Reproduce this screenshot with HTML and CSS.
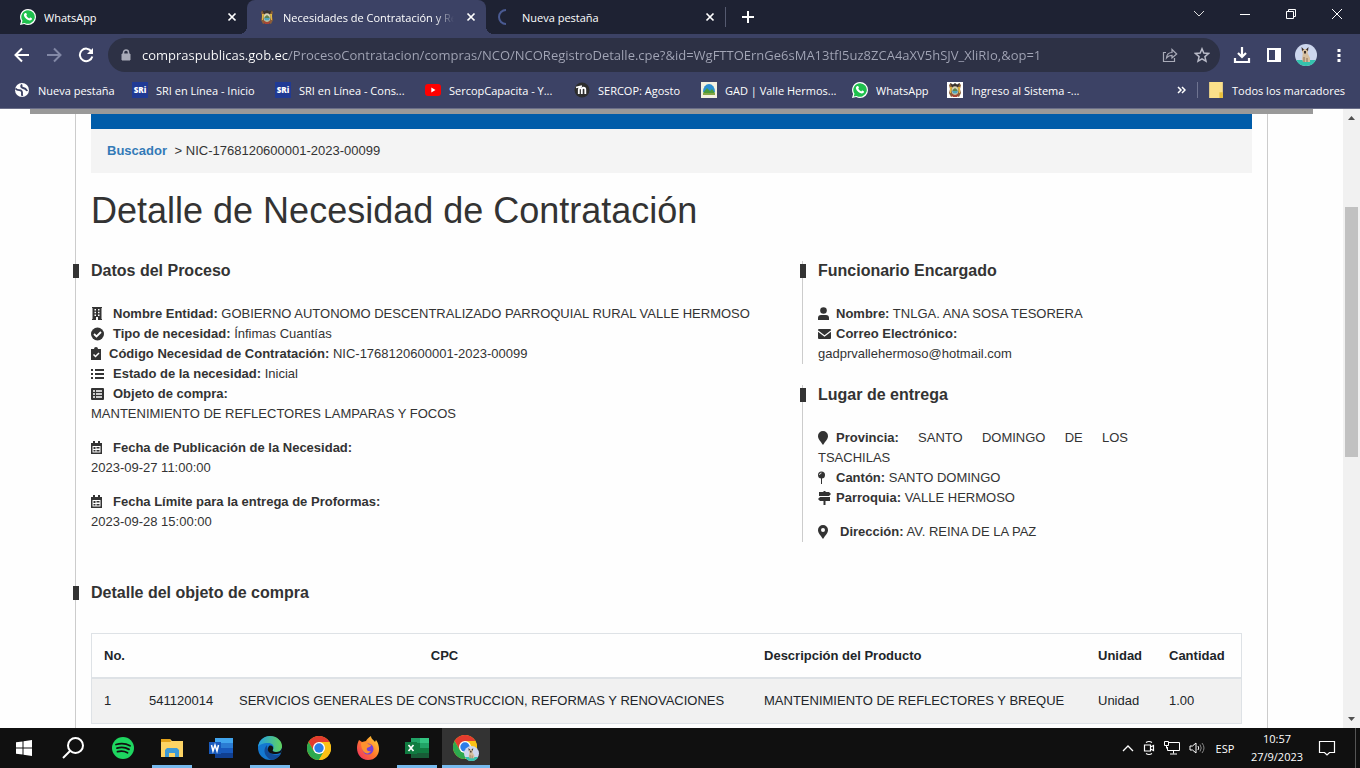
FILE: index.html
```html
<!DOCTYPE html>
<html lang="es">
<head>
    <meta charset="UTF-8">
    <meta name="viewport" content="width=device-width, initial-scale=1.0">
    <title>Necesidades de Contratación y Recepción de Proformas</title>
    <link rel="stylesheet" href="styles.css">
</head>
<body>

    <!-- Shared icons -->
    <svg class="symbols" aria-hidden="true">
        <symbol id="whatsapp" viewBox="0 0 16 16">
            <path fill="#fff" d="M8 0a8 8 0 0 1 0 16c-1.400 0-2.700-.4-3.900-1L0 16l1.100-4A8 8 0 0 1 8 0z"/>
            <path fill="#1fc04d" d="M8 1.200a6.800 6.800 0 1 1-3.400 12.700l-2.900.7.8-2.800A6.800 6.800 0 0 1 8 1.200z"/>
            <path fill="#fff" d="M5.300 4.100c.5-.3.9-.2 1.100.3l.5 1.200c.1.400-.5.9-.6 1.100.6 1.200 1.600 2.100 2.900 2.700.3-.2.800-1.100 1.200-.9l1.400.7c.4.2.1 1.400-.5 1.800-1 .7-2.200.5-3.700-.3-1.600-.8-3-2.300-3.600-3.900-.4-1.200.1-2.100 1.300-2.700z"/>
        </symbol>
        <symbol id="shield" viewBox="0 0 16 16">
            <path fill="#8a6038" d="M2 3l2-2 1 2h6l1-2 2 2-1 4 1 4-2 4-2-1-2 1-2-1-2 1-2-4 1-4z"/>
            <path fill="#e0b840" d="M3 5h2l-1 6H3zM13 5h-2l1 6h1z"/>
            <path fill="#3a3431" d="M3 1l3 1.500L8 1l2 1.500L13 1l-2 4H5z"/>
            <ellipse cx="8" cy="8.500" rx="3.300" ry="4.300" fill="#d9d2b4"/>
            <path fill="#4fa5bd" d="M5 9h6l-1 2.500H6z"/>
            <path fill="#5d8450" d="M5.500 8L8 6l2.500 2v1h-5z"/>
            <path fill="#a94335" d="M4 12l4 1.500 4-1.500-2 3H6z"/>
        </symbol>
        <symbol id="close" viewBox="0 0 10 10">
            <path d="M1.500 1.500l7 7m0-7l-7 7" stroke="currentColor" stroke-width="1.700"/>
        </symbol>
        <symbol id="calendar" viewBox="0 0 14 14">
            <path d="M0 2h2V0h2v2h3V0h2v2h2v11H0zM1.500 5v6.500h8V5z" fill="currentColor" fill-rule="evenodd"/>
            <path d="M2.500 6h2v2h-2zM5.500 6h3v1.500h-3zM2.500 9h2v1.500h-2zM5.500 9h3v1.500h-3z" fill="currentColor"/>
        </symbol>
        <symbol id="chrome" viewBox="0 0 24 24">
            <circle cx="12" cy="12" r="12" fill="#fbc116"/>
            <path fill="#e33b2e" d="M1.600 6A12 12 0 0 1 22.400 6H12L6.800 15z"/>
            <path fill="#2da94f" d="M1.600 6A12 12 0 0 0 12 24l5.200-9L12 18l-5.200-3z"/>
            <path fill="#fbc116" d="M12 6h10.400A12 12 0 0 1 12 24l5.200-9z"/>
            <circle cx="12" cy="12" r="6" fill="#fff"/>
            <circle cx="12" cy="12" r="4.700" fill="#2b7de9"/>
        </symbol>
        <symbol id="cat" viewBox="0 0 22 22">
            <circle cx="11" cy="11" r="11" fill="#cdd7ee"/>
            <path fill="#35c3ae" d="M1.200 16h19.600a11 11 0 0 1-19.600 0z"/>
            <path fill="#d6bf9f" d="M8 8h4l3 6v4H8l-1-3z"/>
            <path fill="#d6bf9f" d="M7 5h6v3l-2 2H9L7 8z"/>
            <path fill="#3a2f2b" d="M6.500 3l2.500 2.500L7 7zM13.500 3L11 5.500 13 7zM9 7h2v2.500H9z"/>
            <path stroke="#8a6e56" d="M9 13v5M12 14v4"/>
        </symbol>
    </svg>

    <header class="browser">
        <div class="tab-strip">
            <div class="tab">
                <svg class="favicon"><use href="#whatsapp"/></svg>
                <span class="tab-title">WhatsApp</span>
                <button class="tab-close" aria-label="Cerrar"><svg><use href="#close"/></svg></button>
            </div>
            <div class="tab active">
                <svg class="favicon"><use href="#shield"/></svg>
                <span class="tab-title fade">Necesidades de Contratación y Recepción</span>
                <button class="tab-close" aria-label="Cerrar"><svg><use href="#close"/></svg></button>
            </div>
            <div class="tab">
                <svg class="favicon" viewBox="0 0 16 16"><path d="M8 1a7 7 0 0 0 0 14" fill="none" stroke="#4a5a92" stroke-width="2"/></svg>
                <span class="tab-title">Nueva pestaña</span>
                <button class="tab-close" aria-label="Cerrar"><svg><use href="#close"/></svg></button>
            </div>
            <button class="new-tab" aria-label="Nueva pestaña"><svg width="14" height="14" viewBox="0 0 14 14"><path d="M7 1v12M1 7h12" stroke="#fff" stroke-width="2"/></svg></button>
            <div class="window-buttons">
                <button aria-label="Buscar pestañas"><svg width="12" height="12" viewBox="0 0 12 12"><path d="M1 3l5 5 5-5" fill="none" stroke="#ddd"/></svg></button>
                <button aria-label="Minimizar"><svg width="12" height="12" viewBox="0 0 12 12"><path d="M1 6.500h10" stroke="#fff"/></svg></button>
                <button aria-label="Restaurar"><svg width="12" height="12" viewBox="0 0 12 12"><path d="M1.500 3.500h7v7h-7zM3.500 3.500v-2h7v7h-2" fill="none" stroke="#fff"/></svg></button>
                <button aria-label="Cerrar ventana"><svg width="12" height="12" viewBox="0 0 12 12"><path d="M1 1l10 10M11 1L1 11" stroke="#fff"/></svg></button>
            </div>
        </div>

        <div class="toolbar">
            <button class="nav-button" aria-label="Atrás"><svg width="16" height="16" viewBox="0 0 16 16"><path d="M15 8H2M8 1.500L1.500 8 8 14.500" fill="none" stroke="#fff" stroke-width="2"/></svg></button>
            <button class="nav-button" aria-label="Adelante"><svg width="16" height="16" viewBox="0 0 16 16"><path d="M1 8h13M8 1.500L14.500 8 8 14.500" fill="none" stroke="#8288a6" stroke-width="2"/></svg></button>
            <button class="nav-button" aria-label="Recargar"><svg width="16" height="16" viewBox="0 0 16 16"><path d="M13.500 4.500A6.300 6.300 0 1 0 14.300 9.500" fill="none" stroke="#fff" stroke-width="2"/><path d="M15 1v6H9z" fill="#fff"/></svg></button>
            <div class="address-bar">
                <svg width="10" height="12" viewBox="0 0 10 12"><path d="M1 5h8v6H1z" fill="#a9abb8" stroke="#a9abb8"/><path d="M2.500 5V3.500a2.500 2.500 0 0 1 5 0V5" fill="none" stroke="#a9abb8" stroke-width="1.500"/></svg>
                <input class="address" type="text" aria-label="Dirección web" value="compraspublicas.gob.ec/ProcesoContratacion/compras/NCO/NCORegistroDetalle.cpe?&amp;id=WgFTTOErnGe6sMA13tfI5uz8ZCA4aXV5hSJV_XliRIo,&amp;op=1">
                <button aria-label="Compartir"><svg width="16" height="16" viewBox="0 0 16 16"><path d="M4 5.500H1.500v9h11V11" fill="none" stroke="#a9abb8" stroke-width="1.200"/><path d="M4.500 11c.3-3.500 2-5.500 5.500-5.500V2.500L14.700 7 10 11V8.300c-2.500 0-4 .7-5.500 2.700z" fill="none" stroke="#a9abb8" stroke-width="1.200"/></svg></button>
                <button aria-label="Añadir a marcadores"><svg width="16" height="16" viewBox="0 0 16 16"><path d="M8 1.800l1.800 4.300 4.700.4-3.600 3.100 1.100 4.600L8 11.800l-4 2.400 1.100-4.600-3.600-3.100 4.700-.4z" fill="none" stroke="#b9bbc8" stroke-width="1.500"/></svg></button>
            </div>
            <button class="tool" aria-label="Descargas"><svg width="18" height="18" viewBox="0 0 18 18"><path d="M9 1v9M5 7l4 4 4-4M2 12v4h14v-4" fill="none" stroke="#fff" stroke-width="2.200"/></svg></button>
            <button class="tool" aria-label="Panel lateral"><svg width="14" height="14" viewBox="0 0 14 14"><path d="M0 0h14v14H0zM2 2v10h6V2z" fill="#fff" fill-rule="evenodd"/></svg></button>
            <button class="tool" aria-label="Perfil"><svg width="22" height="22"><use href="#cat"/></svg></button>
            <button class="tool" aria-label="Menú"><svg width="4" height="14" viewBox="0 0 4 14"><path d="M.5 1h3v3h-3zM.5 6h3v3h-3zM.5 11h3v3h-3z" fill="#fff"/></svg></button>
        </div>

        <nav class="bookmarks">
            <div class="bookmark-list">
                <a href="#"><svg viewBox="0 0 16 16"><circle cx="8" cy="8" r="7" fill="#fff"/><path d="M1.500 6.500C4 9.500 6 7 7.500 9s-.5 3 1 5M8 2.500C6 5 8.500 6 10.500 6.500S12 9 13.500 8" fill="none" stroke="#3c4265" stroke-width="1.900"/></svg>Nueva pestaña</a>
                <a href="#"><span class="sri">SRi</span>SRI en Línea - Inicio</a>
                <a href="#"><span class="sri">SRi</span>SRI en Línea - Cons...</a>
                <a href="#"><svg viewBox="0 0 16 16"><rect y="2" width="16" height="12" rx="3" fill="#f00"/><path d="M6.300 5.500v5l4.200-2.500z" fill="#fff"/></svg>SercopCapacita - Y...</a>
                <a href="#"><svg viewBox="0 0 16 16"><circle cx="8" cy="8" r="7.500" fill="#2d2d2d"/><path d="M4.800 12V7.500a1.500 1.500 0 0 1 3 0V12m0-4.500a1.700 1.700 0 0 1 3.500 0V12M2 5.500l6-1.500" fill="none" stroke="#fff" stroke-width="1.800"/></svg>SERCOP: Agosto</a>
                <a href="#"><svg viewBox="0 0 16 16"><rect width="16" height="16" fill="#f4f1df"/><path d="M2 10a6 8 0 0 1 12 0z" fill="#2c8fd0"/><path d="M2 11l4-5 3 3 2-2 3 4z" fill="#4b9b3a"/><path d="M2 11h12v2H2z" fill="#87a646"/></svg>GAD | Valle Hermos...</a>
                <a href="#"><svg><use href="#whatsapp"/></svg>WhatsApp</a>
                <a href="#"><svg class="on-white"><use href="#shield"/></svg>Ingreso al Sistema -...</a>
            </div>
            <button class="more" aria-label="Más marcadores"><svg width="9" height="8" viewBox="0 0 9 8"><path d="M1 1l3 3-3 3M5 1l3 3-3 3" fill="none" stroke="#fff" stroke-width="1.500"/></svg></button>
            <a class="all-bookmarks" href="#"><svg viewBox="0 0 12 14"><path d="M0 0h12v14H0z" fill="#fbe08a"/><path d="M9 9h3v5H9z" fill="#e9c03c"/></svg>Todos los marcadores</a>
        </nav>
    </header>

    <div class="viewport">
        <main class="page">
            <div class="top-strip"></div>
            <div class="container">
                <div class="blue-bar"></div>
                <div class="breadcrumb"><a href="#">Buscador</a> &gt; NIC-1768120600001-2023-00099</div>

                <h1>Detalle de Necesidad de Contratación</h1>

                <div class="columns">
                    <section>
                        <h2>Datos del Proceso</h2>
                        <p>
                            <svg class="icon" viewBox="0 0 14 14"><path d="M1 0h10v1h-.5v11H11v1H7v-3H5v3H1v-1h.5V1H1zM3.500 2v1.500H5V2zM7 2v1.500h1.500V2zM3.500 4.700v1.500H5V4.700zM7 4.700v1.500h1.500V4.700zM3.500 7.400v1.500H5V7.400zM7 7.400v1.500h1.500V7.400z" fill="currentColor" fill-rule="evenodd"/></svg><b>Nombre Entidad:</b> GOBIERNO AUTONOMO DESCENTRALIZADO PARROQUIAL RURAL VALLE HERMOSO<br>
                            <svg class="icon" viewBox="0 0 14 14"><circle cx="6.500" cy="7" r="6.500" fill="currentColor"/><path d="M3 7l2.500 2.500L10 5" fill="none" stroke="#fff" stroke-width="1.800"/></svg><b>Tipo de necesidad:</b> Ínfimas Cuantías<br>
                            <svg class="icon narrow" viewBox="0 0 10 14"><path d="M0 2h3a2 2 0 0 1 4 0h3v11H0z" fill="currentColor"/><path d="M2.500 7.500l2 2 3.500-3.500" fill="none" stroke="#fff" stroke-width="1.500"/></svg><b>Código Necesidad de Contratación:</b> NIC-1768120600001-2023-00099<br>
                            <svg class="icon" viewBox="0 0 14 14"><path d="M0 2h2v2H0zM0 6h2v2H0zM0 10h2v2H0zM4 2h9v2H4zM4 6h9v2H4zM4 10h9v2H4z" fill="currentColor"/></svg><b>Estado de la necesidad:</b> Inicial<br>
                            <svg class="icon" viewBox="0 0 14 14"><rect y="1" width="13" height="12" rx="1" fill="currentColor"/><path d="M2 4h2M5 4h6M2 7h2M5 7h6M2 10h2M5 10h6" stroke="#fff" stroke-width="1.300"/></svg><b>Objeto de compra:</b><br>
                            MANTENIMIENTO DE REFLECTORES LAMPARAS Y FOCOS
                        </p>
                        <p>
                            <svg class="icon"><use href="#calendar"/></svg><b>Fecha de Publicación de la Necesidad:</b><br>
                            2023-09-27 11:00:00
                        </p>
                        <p>
                            <svg class="icon"><use href="#calendar"/></svg><b>Fecha Límite para la entrega de Proformas:</b><br>
                            2023-09-28 15:00:00
                        </p>
                    </section>

                    <div class="side">
                        <section>
                            <h2>Funcionario Encargado</h2>
                            <p>
                                <svg class="icon" viewBox="0 0 14 14"><circle cx="5.500" cy="3.500" r="3.300" fill="currentColor"/><path d="M0 13v-2a3 3 0 0 1 3-3h5a3 3 0 0 1 3 3v2z" fill="currentColor"/></svg><b>Nombre:</b> TNLGA. ANA SOSA TESORERA<br>
                                <svg class="icon" viewBox="0 0 14 14"><rect y="2" width="13" height="10" rx="1" fill="currentColor"/><path d="M0 4l6.500 5L13 4" fill="none" stroke="#fff" stroke-width="1.200"/></svg><b>Correo Electrónico:</b><br>
                                gadprvallehermoso@hotmail.com
                            </p>
                        </section>
                        <section>
                            <h2>Lugar de entrega</h2>
                            <p>
                                <svg class="icon" viewBox="0 0 14 14"><path d="M5 14C2 9.500 0 8 0 5a5 5 0 0 1 10 0c0 3-2 4.500-5 9z" fill="currentColor"/></svg><b>Provincia:</b> SANTO DOMINGO DE LOS TSACHILAS<br>
                                <svg class="icon" viewBox="0 0 14 14"><circle cx="3.500" cy="4" r="3.500" fill="currentColor"/><path d="M3 7h1v6H3z" fill="currentColor"/><path d="M1.500 4a2 2 0 0 1 2-2" fill="none" stroke="#fff" stroke-width=".8"/></svg><b>Cantón:</b> SANTO DOMINGO<br>
                                <svg class="icon" viewBox="0 0 14 14"><path d="M1 1h10l2 2-2 2H1zM2 6h10v4H2L0 8zM5.500 0h2v14h-2z" fill="currentColor"/><path d="M1 5.500h12" stroke="#fff"/></svg><b>Parroquia:</b> VALLE HERMOSO
                            </p>
                            <p class="spaced">
                                <svg class="icon" viewBox="0 0 14 14"><path d="M5 14C2 9.500 0 8 0 5a5 5 0 0 1 10 0c0 3-2 4.500-5 9zM5 3a2 2 0 1 0 0 4 2 2 0 0 0 0-4z" fill="currentColor" fill-rule="evenodd"/></svg><b>Dirección:</b> AV. REINA DE LA PAZ
                            </p>
                        </section>
                    </div>
                </div>

                <section>
                    <h2>Detalle del objeto de compra</h2>
                    <table>
                        <colgroup>
                            <col class="col-no"><col class="col-code"><col class="col-cpc"><col><col class="col-unit"><col class="col-qty">
                        </colgroup>
                        <thead>
                            <tr>
                                <th>No.</th>
                                <th class="center" colspan="2">CPC</th>
                                <th>Descripción del Producto</th>
                                <th>Unidad</th>
                                <th>Cantidad</th>
                            </tr>
                        </thead>
                        <tbody>
                            <tr>
                                <td>1</td>
                                <td>541120014</td>
                                <td>SERVICIOS GENERALES DE CONSTRUCCION, REFORMAS Y RENOVACIONES</td>
                                <td>MANTENIMIENTO DE REFLECTORES Y BREQUE</td>
                                <td>Unidad</td>
                                <td>1.00</td>
                            </tr>
                        </tbody>
                    </table>
                </section>
            </div>
        </main>

        <div class="scrollbar">
            <svg width="7" height="4" viewBox="0 0 7 4"><path d="M0 4l3.500-4L7 4z" fill="#505050"/></svg>
            <div class="track"><div class="thumb"></div></div>
            <svg width="7" height="4" viewBox="0 0 7 4"><path d="M0 0l3.500 4L7 0z" fill="#505050"/></svg>
        </div>
    </div>

    <footer class="taskbar">
        <div class="apps">
            <button aria-label="Inicio"><svg width="16" height="16" viewBox="0 0 16 16"><path d="M0 2.300L6.500 1.400v6.100H0zM7.500 1.200L16 0v7.500H7.500zM0 8.500h6.500v6.100L0 13.700zM7.500 8.500H16V16l-8.500-1.200z" fill="#fff"/></svg></button>
            <button class="search" aria-label="Buscar"><svg width="22" height="22" viewBox="0 0 22 22"><circle cx="13.500" cy="8.500" r="7.500" fill="none" stroke="#fff" stroke-width="2"/><path d="M8 14l-7 7" stroke="#fff" stroke-width="2"/></svg></button>
            <button aria-label="Spotify"><svg width="22" height="22" viewBox="0 0 22 22"><circle cx="11" cy="11" r="11" fill="#1ed760"/><path d="M4 7.500c5-1.500 10-1 14 1.200M5 11.200c4-1.200 8.500-.8 12 1.200M5.500 14.700c3.500-.9 7-.6 10 1.100" fill="none" stroke="#111" stroke-width="1.800" stroke-linecap="round"/></svg></button>
            <button class="running" aria-label="Explorador de archivos"><svg width="22" height="20" viewBox="0 0 22 20"><path d="M0 1h9l2 2h11v16H0z" fill="#fcd364"/><path d="M0 1h9l1 3H0z" fill="#e3a21a"/><path d="M4 19v-7l2-2h10l2 2v7h-4v-4H8v4z" fill="#3d9ad6"/></svg></button>
            <button aria-label="Word"><svg width="24" height="22" viewBox="0 0 24 22"><path d="M6 1h18v5H6z" fill="#41a5ee"/><path d="M6 6h18v5H6z" fill="#2b7cd3"/><path d="M6 11h18v5H6z" fill="#185abd"/><path d="M6 16h18v5H6z" fill="#103f91"/><path d="M0 5h12v12H0z" fill="#185abd"/><path d="M2.500 8L4 14l2-6 2 6 1.500-6" fill="none" stroke="#fff" stroke-width="1.500"/></svg></button>
            <button class="running" aria-label="Edge">
                <svg width="24" height="24" viewBox="0 0 24 24">
                    <defs><linearGradient id="edge-top"><stop offset="0" stop-color="#249fe5"/><stop offset="1" stop-color="#62d35b"/></linearGradient></defs>
                    <circle cx="12" cy="12" r="12" fill="#1478d0"/>
                    <path d="M0 11C1 4 6 0 12 0c7 0 12 5 12 10 0 4-3 6-6 6-3 0-4-1-3-2.500 2-4-1-6.500-5-6.500-5 0-9 2-10 4z" fill="url(#edge-top)"/>
                    <path d="M9 9c-5 5-2 12 4 15 4 0 8-3 10-6-7 3-14-1-14-9z" fill="#124b98"/>
                    <path d="M11 10c-3 4 0 8 5 8 3 0 5-.5 7-1.500l1-2.500v-2c-1 3-3 4-6 4-3 0-4-1-3-2.500 1-2-1-5-4-3.500z" fill="#101010"/>
                </svg>
            </button>
            <button aria-label="Chrome"><svg width="24" height="24"><use href="#chrome"/></svg></button>
            <button aria-label="Firefox">
                <svg width="24" height="24" viewBox="0 0 24 24">
                    <defs><linearGradient id="fire" x1="1" y1="0" x2="0" y2="1"><stop offset="0" stop-color="#ffe13c"/><stop offset=".5" stop-color="#ff7a2b"/><stop offset="1" stop-color="#f0256c"/></linearGradient></defs>
                    <path d="M3 4l3 2 4-1c1-2 3-4 5-5 0 3 3 4 4 6l1-2c6 8 3 20-8 20C3 24-2 14 3 4z" fill="url(#fire)"/>
                    <circle cx="12" cy="13" r="5.500" fill="#7640d8"/>
                    <path d="M5 7c3-2 6-1 7 1l3 1c0 2-3 2-4 3-1 2 1 4 4 3-3 5-10 2-10-8z" fill="#ff922e"/>
                </svg>
            </button>
            <button class="running" aria-label="Excel"><svg width="24" height="22" viewBox="0 0 24 22"><path d="M6 1h18v20H6z" fill="#21a366"/><path d="M6 6h9v10H6z" fill="#107c41"/><path d="M15 1h9v5h-9z" fill="#33c481"/><path d="M6 16h18v5H6z" fill="#185c37"/><path d="M15 11h9v5h-9z" fill="#107c41"/><path d="M0 5h12v12H0z" fill="#107c41"/><path d="M3.500 8l5 6M8.500 8l-5 6" stroke="#fff" stroke-width="1.700"/></svg></button>
            <button class="running current" aria-label="Chrome, perfil"><svg width="26" height="26" viewBox="0 0 26 26"><use href="#chrome" width="24" height="24"/><use href="#cat" x="11" y="11" width="15" height="15"/></svg></button>
        </div>

        <div class="tray">
            <svg width="12" height="8" viewBox="0 0 12 8"><path d="M1 7l5-5 5 5" fill="none" stroke="#fff" stroke-width="1.300"/></svg>
            <svg width="12" height="16" viewBox="0 0 12 16"><path d="M1.500 5h6v6h-6zM7.500 7l3-1.500v5L7.500 9M3 2.500q3-2 6 0M3 13.500q3 2 6 0" fill="none" stroke="#fff" stroke-width="1.200"/></svg>
            <svg width="16" height="14" viewBox="0 0 16 14"><path d="M5 1.500h10.500v8H3.500V6M9.500 9.500v3M6 13h7" fill="none" stroke="#fff"/><path d="M.5.500h4v4h-4zM2.500 4.500v3" fill="none" stroke="#fff"/></svg>
            <svg width="16" height="14" viewBox="0 0 16 14"><path d="M1 5h2.500L7 2v10L3.500 9H1z" fill="none" stroke="#fff"/><path d="M9 5q1.500 2 0 4" fill="none" stroke="#fff"/><path d="M11 3.500q2.500 3.500 0 7M13 2q4 5 0 10" fill="none" stroke="#888"/></svg>
            <span class="lang">ESP</span>
            <div class="clock">10:57<br>27/9/2023</div>
            <svg width="18" height="18" viewBox="0 0 18 18"><path d="M1.500 2.500h15v11h-5L9 16l-2.500-2.500h-5z" fill="none" stroke="#fff" stroke-width="1.200"/></svg>
        </div>
    </footer>

</body>
</html>
```
FILE: styles.css
```css
* {
    box-sizing: border-box;
}
body {
    margin: 0;
    height: 100vh;
    display: flex;
    flex-direction: column;
    overflow: hidden;
    font-family: "Liberation Sans", Arial, sans-serif;
    font-size: 13px;
    color: #333;
}
button {
    padding: 0;
    border: none;
    background: none;
    color: #fff;
    display: flex;
    align-items: center;
    justify-content: center;
}
.symbols {
    position: absolute;
    width: 0;
    height: 0;
}

/* Browser window */
.browser {
    flex: none;
    background-color: #3c4265;
    border-bottom: 1px solid #6a6e88;
    font-family: "Open Sans", sans-serif;
    font-size: 11px;
    color: #fff;
}
.tab-strip {
    display: flex;
    height: 34px;
    padding-left: 8px;
    background-color: #1e2233;
}
.tab {
    display: flex;
    align-items: center;
    width: 239px;
    padding: 0 10px 0 12px;
    position: relative;
}
.tab.active {
    background-color: #3c4265;
    border-radius: 8px 8px 0 0;
}
.tab.active::before,
.tab.active::after {
    content: "";
    position: absolute;
    bottom: 0;
    width: 8px;
    height: 8px;
}
.tab.active::before {
    right: 100%;
    background: radial-gradient(circle at 0 0, #1e2233 8px, #3c4265 8px);
}
.tab.active::after {
    left: 100%;
    background: radial-gradient(circle at 100% 0, #1e2233 8px, #3c4265 8px);
}
.favicon {
    flex: none;
    width: 16px;
    height: 16px;
}
.tab-title {
    flex: 1;
    margin: 0 8px;
    overflow: hidden;
    white-space: nowrap;
}
.tab-title.fade {
    margin-right: 12px;
    -webkit-mask-image: linear-gradient(to left, transparent, #000 20px);
    mask-image: linear-gradient(to left, transparent, #000 20px);
}
.tab-close svg {
    width: 10px;
    height: 10px;
}
.new-tab {
    width: 46px;
    position: relative;
}
.new-tab::before {
    content: "";
    position: absolute;
    left: 0;
    top: 7px;
    width: 1px;
    height: 20px;
    background-color: #555a70;
}
.window-buttons {
    display: flex;
    margin-left: auto;
}
.window-buttons button {
    width: 46px;
    height: 28px;
}

.toolbar {
    display: flex;
    align-items: center;
    height: 42px;
    padding: 0 12px 0 6px;
}
.nav-button {
    width: 32px;
    height: 32px;
}
.address-bar {
    flex: 1;
    display: flex;
    align-items: center;
    gap: 16px;
    height: 34px;
    margin: 0 6px;
    padding: 0 10px 0 13px;
    border-radius: 17px;
    background-color: #2d3145;
}
.address-bar > svg {
    margin-right: -5px;
}
.address {
    flex: 1;
    min-width: 0;
    border: none;
    outline: none;
    padding: 0;
    font-family: "Open Sans", sans-serif;
    font-size: 13px;
    color: #a3a6b7;
    background: linear-gradient(to right, #fff 147px, #a3a6b7 147px);
    -webkit-background-clip: text;
    background-clip: text;
    -webkit-text-fill-color: transparent;
}
.tool {
    width: 32px;
    height: 32px;
}
.tool:last-child {
    width: 34px;
    margin-right: -8px;
}

.bookmarks {
    display: flex;
    align-items: center;
    height: 32px;
    padding: 0 14px 4px;
}
.bookmarks a {
    display: flex;
    align-items: center;
    gap: 8px;
    color: #fff;
    text-decoration: none;
    white-space: nowrap;
}
.bookmarks a svg {
    flex: none;
    width: 16px;
    height: 16px;
}
.bookmarks .on-white {
    background-color: #fff;
}
.bookmarks .sri {
    width: 16px;
    height: 16px;
    background-color: #203a94;
    font-size: 8px;
    font-weight: 800;
    line-height: 16px;
    text-align: center;
}
.bookmark-list {
    flex: 1;
    display: grid;
    grid-template-columns: 118px 143px 150px 149px 127px 151px 95px 1fr;
}
.more {
    width: 24px;
    height: 16px;
    padding-right: 8px;
    border-right: 1px solid #6f7491;
    margin-right: 10px;
}
.all-bookmarks {
    width: 138px;
}

/* Web page */
.viewport {
    flex: 1;
    min-height: 0;
    display: flex;
    background-color: #fefefe;
}
.page {
    flex: 1;
    min-width: 0;
    overflow: hidden;
}
.top-strip {
    height: 5px;
    margin: 0 30px;
    background-color: #999;
}
.container {
    margin: 0 75px;
    padding: 0 15px 40px;
    border: 1px solid #ccc;
    border-width: 0 1px;
}
.blue-bar {
    height: 15px;
    background-color: #005ca9;
}
.breadcrumb {
    height: 44px;
    padding: 0 16px;
    line-height: 44px;
    background-color: #f4f4f4;
}
.breadcrumb a {
    margin-right: 4px;
    color: #337ab7;
    font-weight: bold;
    text-decoration: none;
}
h1 {
    margin: 16px 0 0;
    font-size: 36px;
    font-weight: normal;
    line-height: 44px;
}
h2 {
    position: relative;
    margin: 0 0 23px;
    font-size: 16px;
    line-height: 20px;
}
/* black marker that sits over the vertical line */
h2::before {
    content: "";
    position: absolute;
    left: -18px;
    top: 3px;
    width: 6px;
    height: 14px;
    background-color: #333;
}
p {
    margin: 0 0 14px;
    line-height: 20px;
}
b {
    font-weight: bold;
}
.icon {
    width: 14px;
    height: 14px;
    margin-right: 8px;
    vertical-align: -3px;
}
.icon.narrow {
    width: 10px;
}
.columns {
    display: grid;
    grid-template-columns: 1fr 450px;
    margin-top: 28px;
}
.side section {
    padding-left: 15px;
    border-left: 1px solid #ccc;
    margin-bottom: 21px;
}
.side p {
    max-width: 310px;
    text-align: justify;
}
.side p:last-child {
    margin-bottom: 0;
}
.side .icon {
    margin-right: 4px;
}
.side .spaced .icon {
    margin-right: 8px;
}
.columns + section {
    margin-top: 20px;
}
table {
    width: calc(100% - 10px);
    margin-top: 30px;
    border: 1px solid #dee2e6;
    border-collapse: separate;
    border-spacing: 0;
    table-layout: fixed;
    color: #212529;
}
th,
td {
    height: 43px;
    padding: 0 12px;
    text-align: left;
    white-space: nowrap;
}
td {
    height: 46px;
    padding-bottom: 2px;
    background-color: #f1f1f1;
    border-top: 2px solid #dee2e6;
}
.center {
    text-align: center;
}
.col-no {
    width: 45px;
}
.col-code {
    width: 90px;
}
.col-cpc {
    width: 525px;
}
.col-unit {
    width: 71px;
}
.col-qty {
    width: 84px;
}

.scrollbar {
    flex: none;
    width: 17px;
    padding: 7px 2px;
    display: flex;
    flex-direction: column;
    align-items: center;
    background-color: #f1f1f1;
}
.track {
    flex: 1;
    width: 100%;
    padding: 87px 0 0;
}
.thumb {
    height: 250px;
    background-color: #c1c1c1;
}

/* Windows taskbar */
.taskbar {
    flex: none;
    display: flex;
    justify-content: space-between;
    height: 40px;
    background-color: #101010;
    color: #fff;
    font-family: "Open Sans", sans-serif;
    font-size: 11px;
}
.apps {
    display: flex;
    gap: 1px;
}
.apps button {
    width: 48px;
    position: relative;
}
.apps .search {
    margin-right: 1px;
}
.apps .running::after {
    content: "";
    position: absolute;
    left: 4px;
    right: 4px;
    bottom: 0;
    height: 3px;
    background-color: #76b9ed;
}
.apps .current {
    background-color: #333;
}
.apps .current::after {
    left: 0;
    right: 0;
}
.tray {
    display: flex;
    align-items: center;
    gap: 9px;
    padding-right: 4px;
    border-right: 1px solid #555;
    margin-right: 4px;
    padding-right: 19px;
}
.lang {
    width: 22px;
    text-align: center;
}
.clock {
    width: 64px;
    text-align: center;
    line-height: 18px;
}
```
